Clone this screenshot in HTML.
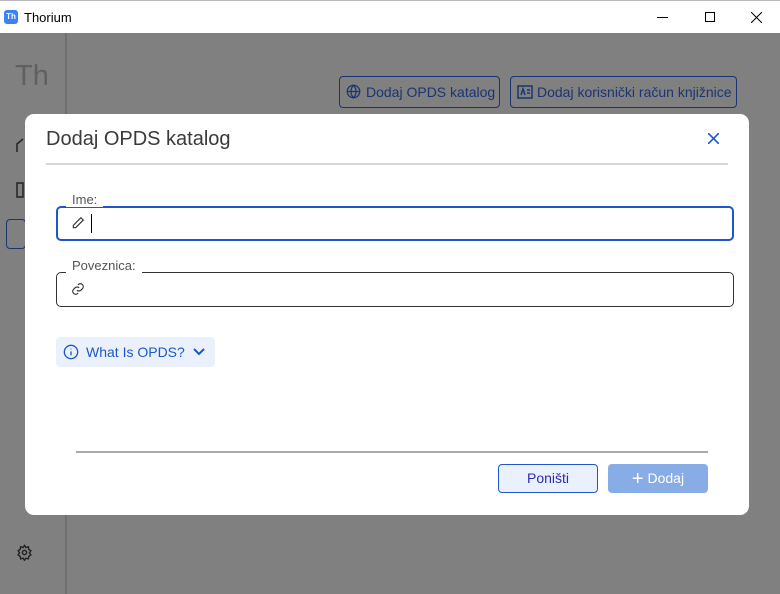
<!DOCTYPE html>
<html><head><meta charset="utf-8"><style>
*{box-sizing:border-box;margin:0;padding:0}
body{width:780px;height:594px;overflow:hidden;background:#808080;font-family:"Liberation Sans",sans-serif;position:relative}
.tb{position:absolute;left:0;top:0;width:780px;height:33px;background:#fff;border-top:1px solid #bbb}
.tb .t{position:absolute;left:24px;top:9px;font-size:13px;color:#000}
.logo{position:absolute;left:4px;top:9px;width:14px;height:14px;background:#3b82f6;border-radius:3px;color:#fff;font-size:8px;font-weight:bold;text-align:center;line-height:14px}
.side{position:absolute;left:0;top:33px;width:67px;height:561px;border-right:2px solid #707070}
.abs{position:absolute}
.bb{position:absolute;top:76px;height:32px;border:1px solid #1a3570;border-radius:4px;color:#1a3570;font-size:14px;line-height:30px;padding-left:26px}
.dlg{position:absolute;left:25px;top:114px;width:724px;height:401px;background:#fff;border-radius:9px}
.inp{position:absolute;left:31px;width:678px;border-radius:5px}
.lbl{position:absolute;left:41px;font-size:13px;color:#555;background:#fff;padding:0 6px 0 6px}
</style></head><body>
<div class="tb"><div class="logo">Th</div><div class="t">Thorium</div>
<div class="abs" style="left:657px;top:16px;width:11px;height:1px;background:#000"></div>
<div class="abs" style="left:705px;top:11px;width:10px;height:10px;border:1px solid #000"></div>
<svg class="abs" style="left:751px;top:11px" width="11" height="11" viewBox="0 0 11 11" stroke="#000" stroke-width="1"><path d="M0 0L11 11M11 0L0 11"/></svg>
</div>
<div class="side"></div>
<div class="abs" style="left:15px;top:60px;font-size:29px;color:#606060">Th</div>
<svg class="abs" style="left:16px;top:137px" width="12" height="16" viewBox="0 0 12 16" fill="none" stroke="#222" stroke-width="1.5"><path d="M1 15V7l6-5"/></svg>
<svg class="abs" style="left:16px;top:182px" width="10" height="16" viewBox="0 0 10 16" fill="none" stroke="#222" stroke-width="1.5"><rect x="1" y="1" width="6" height="14"/></svg>
<div class="abs" style="left:6px;top:219px;width:20px;height:30px;border:1px solid #1a3570;border-radius:4px"></div>
<svg class="abs" style="left:16px;top:544px" width="17" height="17" viewBox="0 0 24 24" fill="none" stroke="#222" stroke-width="2"><circle cx="12" cy="12" r="3"/><path d="M12 2l2 3 3.5-1 .5 3.5 3 2-2 3 2 3-3 2-.5 3.5-3.5-1-2 3-2-3-3.5 1-.5-3.5-3-2 2-3-2-3 3-2 .5-3.5 3.5 1z"/></svg>
<div class="bb" style="left:339px;width:161px"><svg class="abs" style="left:6px;top:7px" width="15" height="15" viewBox="0 0 24 24" fill="none" stroke="#1a3570" stroke-width="2"><circle cx="12" cy="12" r="10"/><path d="M2 12h20M12 2c3 3 4 6 4 10s-1 7-4 10c-3-3-4-6-4-10s1-7 4-10"/></svg>Dodaj OPDS katalog</div>
<div class="bb" style="left:510px;width:227px"><svg class="abs" style="left:6px;top:8px" width="16" height="14" viewBox="0 0 16 14" fill="none" stroke="#1a3570" stroke-width="1.5"><rect x="1" y="1" width="14" height="12"/><path d="M4 10l2-6 2 6M10 5h3M10 8h3"/></svg>Dodaj korisnički račun knjižnice</div>
<div class="dlg">
<div class="abs" style="left:21px;top:14px;font-size:20px;color:#3a3a3a">Dodaj OPDS katalog</div>
<svg class="abs" style="left:683px;top:19px" width="11" height="11" viewBox="0 0 11 11" stroke="#1f56c9" stroke-width="1.6"><path d="M0 0L11 11M11 0L0 11"/></svg>
<div class="abs" style="left:21px;top:49px;width:682px;height:2px;background:#d6d6d8"></div>
<div class="inp" style="top:92px;height:35px;border:2px solid #1f56c9"></div>
<div class="lbl" style="top:78px">Ime:</div>
<svg class="abs" style="left:46px;top:102px" width="14" height="14" viewBox="0 0 24 24" fill="none" stroke="#333" stroke-width="2"><path d="M17 3l4 4L8 20H4v-4z"/></svg>
<div class="abs" style="left:66px;top:100px;width:1px;height:19px;background:#000"></div>
<div class="inp" style="top:158px;height:35px;border:1px solid #333"></div>
<div class="lbl" style="top:144px">Poveznica:</div>
<svg class="abs" style="left:46px;top:168px" width="14" height="14" viewBox="0 0 24 24" fill="none" stroke="#333" stroke-width="2"><path d="M10 14a5 5 0 007 0l3-3a5 5 0 00-7-7l-1 1M14 10a5 5 0 00-7 0l-3 3a5 5 0 007 7l1-1"/></svg>
<div class="abs" style="left:31px;top:223px;width:159px;height:30px;background:#eaf1fd;border-radius:4px;color:#1f56c9;font-size:14px;line-height:30px;padding-left:30px">What Is OPDS?
<svg class="abs" style="left:7px;top:7px" width="16" height="16" viewBox="0 0 24 24" fill="none" stroke="#1f56c9" stroke-width="2"><circle cx="12" cy="12" r="10"/><path d="M12 11v6M12 7v1"/></svg>
<svg class="abs" style="left:137px;top:10px" width="12" height="10" viewBox="0 0 12 10" fill="none" stroke="#1f56c9" stroke-width="2"><path d="M1 2l5 5 5-5"/></svg></div>
<div class="abs" style="left:51px;top:337px;width:632px;height:2px;background:#aaa"></div>
<div class="abs" style="left:473px;top:350px;width:100px;height:29px;background:#eaf1fd;border:1px solid #1f56c9;border-radius:4px;color:#2b2bb5;font-size:14px;line-height:27px;text-align:center">Poništi</div>
<div class="abs" style="left:583px;top:350px;width:100px;height:29px;background:#88ace6;border-radius:4px;color:#fff;font-size:14px;line-height:29px;text-align:center"><span style="font-size:20px;vertical-align:-2px">+</span> Dodaj</div>
</div>
</body></html>
